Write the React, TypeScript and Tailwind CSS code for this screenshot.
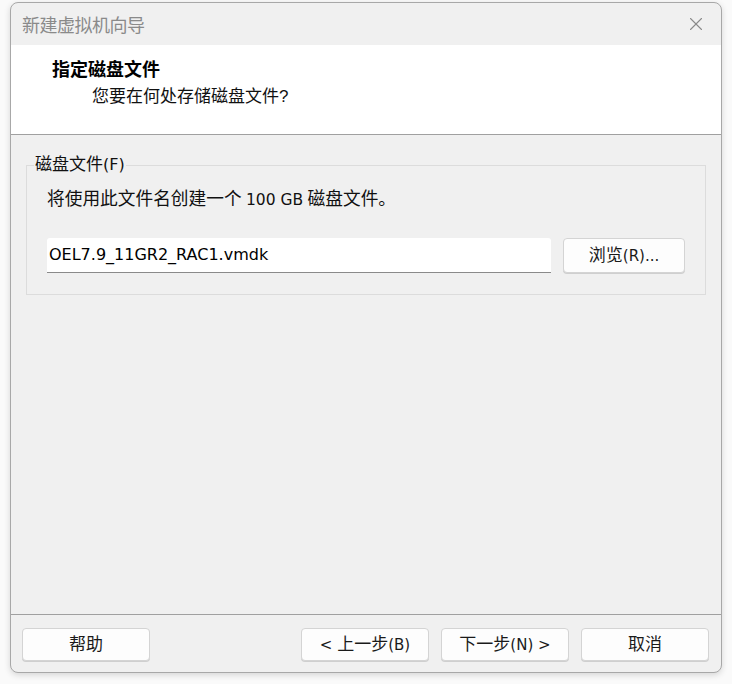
import { X } from 'lucide-react';

const cjk = "font-['SimSun','Liberation_Serif','Noto_Sans_CJK_SC',serif]";

function WinButton({ children, className = 'h-[33px] w-[128px]' }: { children: React.ReactNode; className?: string }) {
    return (
        <button className={`shrink-0 rounded-[4px] border border-[#d4d4d4] bg-[#fdfdfd] text-[17px] text-[#1a1a1a] shadow-[0_1px_0_#cfcfcf] ${className}`}>
            {children}
        </button>
    );
}

export default function App() {
    return (
        <div className={`w-[732px] h-[684px] bg-[#fafafa] pl-[10px] pt-[2px] overflow-hidden flex ${cjk}`}>
            <div className="w-[712px] h-[671px] rounded-[8px] border border-[#a8a8a8] bg-[#f0f0f0] shadow-[0_2px_6px_rgba(0,0,0,0.15)] flex flex-col overflow-hidden">
                <div className="h-[42px] flex items-center justify-between pl-[11px] pr-[14px] shrink-0">
                    <span className="text-[18px] text-[#8a8a8a] font-['Noto_Sans_CJK_SC',sans-serif] tracking-[-0.5px]">新建虚拟机向导</span>
                    <X size={22} strokeWidth={1.2} className="text-[#8a8a8a]" />
                </div>
                <div className="h-[90px] bg-white border-b border-[#a0a0a0] pl-[41px] pt-[11px] shrink-0">
                    <div className="text-[18px] font-bold text-black leading-[28px]">指定磁盘文件</div>
                    <div className="text-[17px] text-[#111] leading-[28px] pl-[40px] mt-[-1px]">
                        您要在何处存储磁盘文件<span className="font-['Liberation_Sans',sans-serif]">?</span>
                    </div>
                </div>
                <div className="flex-1 px-[15px] pt-[30px]">
                    <div className="relative border border-[#dcdcdc] h-[130px] pl-[20px] pr-[18px] pt-[22px]">
                        <span className="absolute left-[7px] top-[-11px] bg-[#f0f0f0] px-[1px] text-[17px] leading-[20px] text-[#111]">
                            磁盘文件<span className="font-['DejaVu_Sans',sans-serif] text-[16px]">(F)</span>
                        </span>
                        <div className="text-[17.7px] leading-[22px] text-[#111]">
                            将使用此文件名创建一个 <span className="font-['DejaVu_Sans',sans-serif] text-[15.5px]">100 GB</span> 磁盘文件。
                        </div>
                        <div className="mt-[27px] flex items-center">
                            <div className="w-[504px] h-[35px] shrink-0 bg-white border-b border-[#8a8a8a] rounded-t-[3px] flex items-center pl-[2px] font-['DejaVu_Sans',sans-serif] text-[16px] text-black">
                                OEL7.9_11GR2_RAC1.vmdk
                            </div>
                            <WinButton className="ml-[12px] w-[122px] h-[35px]">
                                浏览<span className="font-['DejaVu_Sans',sans-serif] text-[15px]">(R)...</span>
                            </WinButton>
                        </div>
                    </div>
                </div>
                <div className="h-[58px] border-t border-[#a0a0a0] flex items-start pt-[13px] pl-[11px] pr-[12px] shrink-0">
                    <WinButton>帮助</WinButton>
                    <WinButton className="h-[33px] w-[128px] ml-auto">
                        <span className="font-['DejaVu_Sans',sans-serif] text-[15px]">&lt; </span>上一步<span className="font-['DejaVu_Sans',sans-serif] text-[15px]">(B)</span>
                    </WinButton>
                    <WinButton className="h-[33px] w-[128px] ml-[12px]">
                        下一步<span className="font-['DejaVu_Sans',sans-serif] text-[15px]">(N) &gt;</span>
                    </WinButton>
                    <WinButton className="h-[33px] w-[128px] ml-[12px]">取消</WinButton>
                </div>
            </div>
        </div>
    );
}
